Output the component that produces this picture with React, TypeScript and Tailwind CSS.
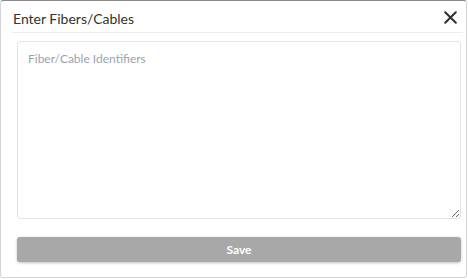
import React from "react";

export default function App() {
  return (
    <div className="w-[468px] h-[279px] bg-white" style={{ fontFamily: "Lato, 'Open Sans', sans-serif" }}>
      <div className="w-[467px] h-[278px] border border-[#d4d4d4] border-t-[#8a8a8a] rounded-[3px] flex flex-col">
        <div className="h-[32px] ml-[11px] mr-[3px] flex items-center justify-between border-b border-[#ececec]">
          <span className="text-[14px] text-[#333] pt-[3px] pl-[1px]">Enter Fibers/Cables</span>
          <svg width="13" height="13" viewBox="0 0 13 13" className="mr-[6px] mt-[1px]">
            <path d="M1.2 1.2 L11.8 11.8 M11.8 1.2 L1.2 11.8" stroke="#2b2f36" strokeWidth="2" strokeLinecap="round" />
          </svg>
        </div>
        <div className="pl-[16px] pr-[5px] pt-[8px]">
          <textarea
            placeholder="Fiber/Cable Identifiers"
            className="w-full h-[178px] border border-[#e4e4e4] rounded-[3px] px-[10px] py-[8px] text-[12px] text-[#333] placeholder:text-[#9ba3ae] outline-none block"
          />
          <button className="mt-[18px] w-full h-[25px] rounded-[3px] bg-[#a8a8a8] text-white text-[12px] font-bold shadow-[0_1px_3px_rgba(0,0,0,0.25)]">
            Save
          </button>
        </div>
      </div>
    </div>
  );
}
